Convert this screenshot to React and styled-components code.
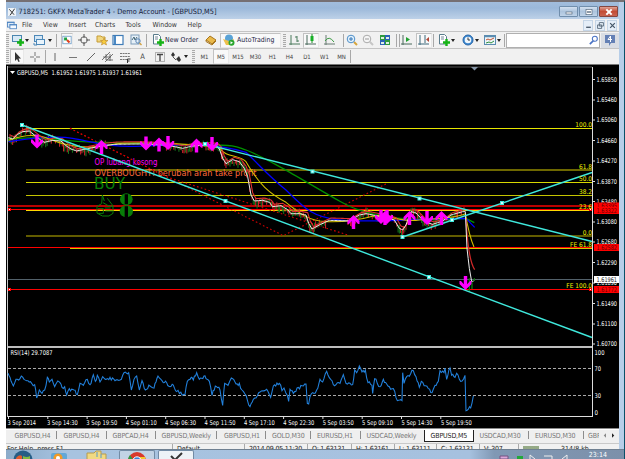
import React from 'react';
import styled, { createGlobalStyle } from 'styled-components';

const Global = createGlobalStyle`
  * { box-sizing: border-box; }
  body { margin: 0; background: #fff; overflow: hidden; }
  body, svg text { font-family: "DejaVu Sans Condensed", "DejaVu Sans", "Noto Sans", sans-serif; font-stretch: condensed; }
`;

const Screen = styled.div`
  display: flex;
  width: 625px;
  height: 459px;
  padding-left: 6px;
  overflow: hidden;
`;
const Frame = styled.div`
  flex: 1;
  display: flex;
  flex-direction: column;
  min-width: 0;
  background: #b7cee8;
  border-top: 2px solid #756f72;
  border-right: 1px solid #0a5068;
`;
const Body = styled.div`
  width: 613px;
  flex: none;
`;
const Row = styled.div`
  display: flex;
  align-items: center;
  height: ${(p) => p.$h}px;
`;
const TitleBar = styled(Row)`
  background: linear-gradient(#a2bddc, #9bb8d9 35%, #bdd1e8);
  color: #15203a;
  padding: 2px 0 0 2px;
`;
const MenuBar = styled(Row)`
  background: #f2f2f3;
  color: #333;
  padding-left: 1px;
`;
const ToolBar = styled(Row)`
  background: #f1f1f1;
  border-top: 1px solid #c4c4c4;
`;
const Cell = styled.div`
  flex: none;
  display: flex;
  align-items: center;
  justify-content: ${(p) => (p.$left ? 'flex-start' : 'center')};
  width: ${(p) => p.$w}px;
  height: 15px;
  margin-left: ${(p) => p.$l || 0}px;
  ${(p) => p.$pressed && 'background:#f9f9f9;border:1px solid #c2c2c2;border-right-color:#e8e8e8;border-bottom-color:#e8e8e8;'}
`;
const Label = styled.span`
  flex: none;
  ${(p) => p.$w && `width: ${p.$w}px;`}
  font-size: ${(p) => p.$size || 6.9}px;
  letter-spacing: ${(p) => p.$ls || 0}px;
  color: ${(p) => p.$c || 'inherit'};
  white-space: nowrap;
`;
const Sep = styled.i`
  flex: none;
  width: 1px;
  height: 13px;
  margin: 0 ${(p) => p.$r || 0}px 0 ${(p) => p.$l || 0}px;
  background: #a8a8a8;
`;
const Grip = styled.i`
  flex: none;
  width: 3px;
  height: 13px;
  margin: 0 ${(p) => p.$r || 0}px 0 ${(p) => p.$l || 0}px;
  background: repeating-linear-gradient(#aaa 0 1px, #eee 1px 2px);
`;
const Caret = styled.i`
  flex: none;
  margin: 0 ${(p) => p.$r || 0}px 0 ${(p) => p.$l || 0}px;
  border: 2px solid transparent;
  border-top: 3px solid #222;
  border-bottom: 0;
`;
const WinButton = styled.div`
  display: flex;
  align-items: center;
  justify-content: center;
  width: 19px;
  height: 11px;
  margin-right: 1px;
  border: 1px solid ${(p) => (p.$close ? '#85463f' : '#708eac')};
  border-radius: 1px;
  background: ${(p) => (p.$close ? 'linear-gradient(#dfa395, #c34c35 50%, #c96450)' : 'linear-gradient(#d3e0ef, #adc4dd 50%, #bfd3e8)')};
`;
const ChildButton = styled.div`
  display: flex;
  align-items: center;
  justify-content: center;
  width: 10px;
  height: 11px;
  margin-right: 2px;
  background: #e5eef8;
  border: 1px solid #c5d5e6;
`;
const Spacer = styled.div`flex: 1;`;
const SearchBox = styled.div`
  display: flex;
  flex: none;
  align-items: center;
  justify-content: flex-end;
  width: 94px;
  height: 15px;
  margin-left: 1px;
  background: #fff;
  border: 1px solid #b0b0b0;
`;
const ChatButton = styled(Cell)`
  background: #d9dde4;
`;
const Plot = styled.svg`
  display: block;
  width: 613px;
  height: 365px;
`;
const TabBar = styled(Row)`
  align-items: stretch;
  background: #efefef;
  color: #777;
  border-top: 1px solid #fff;
  overflow: hidden;
`;
const Tab = styled.div`
  flex: none;
  display: flex;
  align-items: center;
  width: ${(p) => p.$w}px;
  padding-left: ${(p) => p.$pad}px;
  height: ${(p) => (p.$on ? 12 : 11)}px;
  font-size: 7px;
  letter-spacing: -0.14px;
  white-space: nowrap;
  overflow: hidden;
  ${(p) => p.$on && 'background:#fff;color:#222;border:1px solid #222;border-top:0;'}
`;
const TabRule = styled.i`
  flex: none;
  width: 1px;
  height: 8px;
  margin-top: 1px;
  background: #8c8c8c;
`;
const StatusBar = styled(Row)`
  align-items: flex-start;
  background: #f1f1f1;
  border-top: 1px solid #c9c9c9;
  overflow: hidden;
`;
const Status = styled.div`
  flex: none;
  width: ${(p) => p.$w}px;
  height: 6px;
  padding: 1px 0 0 ${(p) => p.$pad || 4}px;
  border-left: ${(p) => (p.$first ? 0 : 1)}px solid #aaa;
  overflow: hidden;
  font-size: 7px;
  line-height: 8px;
  letter-spacing: ${(p) => p.$ls || 0}px;
  color: #222;
  white-space: nowrap;
`;
const Taskbar = styled.div`
  display: flex;
  align-items: flex-start;
  height: 10px;
  width: 618px;
  padding-left: 7px;
  border-top: 1px solid #6f8091;
  background: linear-gradient(90deg, #8cacca, #a8c3e0 10%, #a6c1df 75%, #8098b4 79%, #7c90aa);
  overflow: hidden;
`;
const TaskItem = styled.div`
  flex: none;
  display: flex;
  justify-content: center;
  width: ${(p) => p.$w}px;
  height: 9px;
  margin-right: ${(p) => p.$r || 0}px;
  ${(p) => p.$on && 'background:' + p.$on + ';border:1px solid #728ba5;border-bottom:0;border-radius:2px 2px 0 0;'}
`;
const Clock = styled.div`
  margin: 1px 17px 0 0;
  color: #fff;
  font-size: 7px;
  line-height: 9px;
`;

const Ico = ({ children, s = 12, w }) => (
  <svg width={w || s} height={s} viewBox={`0 0 ${w || 12} 12`} fill="none">{children}</svg>
);
const Plus = () => <path d="M8.5 5v7M5 8.5h7" stroke="#16b316" strokeWidth="2.4" />;
const icons = {
  newChart: <><rect x=".5" y="1.5" width="9" height="6" fill="#d8e9f5" stroke="#4a86b0" /><Plus /></>,
  profiles: <><rect x="1.5" y="1.5" width="8" height="6" fill="#d4e7f6" stroke="#4d88b8" /><rect x="3.5" y="5.5" width="8" height="5" fill="#e9f4fc" stroke="#4d88b8" /><path d="M1 9v2h3" stroke="#4d88b8" /></>,
  market: <><rect x="1" y="1.5" width="10" height="9" fill="#fff" stroke="#6e9cc6" /><path d="M2.500 3h3.500v3.500H2.500z" fill="#20a040" /><path d="M6 6l3 3" stroke="#e04020" strokeWidth="2.600" /></>,
  target: <><circle cx="6" cy="6" r="3.3" stroke="#666" /><path d="M6 0v4M6 8v4M0 6h4M8 6h4" stroke="#555" /></>,
  folderStar: <><path d="M1 2h4l1 1h3v5H1z" fill="#f0d680" stroke="#c59b34" /><path d="M8 4l1 2.5h3L9.7 8l.8 3L8 9.5 5.5 11l.8-3L4.5 6.5h2.5z" fill="#f8cc3c" stroke="#b8862c" strokeWidth=".6" /></>,
  nav: <><rect x="1" y="1.5" width="10" height="9" fill="#fff" stroke="#3f7cb8" strokeWidth="1.2" /><path d="M2 2h2v8H2z" fill="#4a88c4" /></>,
  tester: <><rect x="1" y="1" width="8" height="9" fill="#e6f0f8" stroke="#7c9cba" /><path d="M2 6l2-3 1 3 2-3" stroke="#467" /><circle cx="8" cy="7" r="2.2" stroke="#5884b4" /><path d="M9.5 9l2 2" stroke="#d0a040" strokeWidth="1.5" /></>,
  order: <><path d="M1.5 .5h5l2 2V10h-7z" fill="#fff" stroke="#5a7c8c" /><path d="M3 3h3M3 5h3" stroke="#789" /><Plus /></>,
  book: <><path d="M1 6l4-4 6 4-4 4z" fill="#e9b94a" stroke="#a9761d" /><path d="M1 6v1.5l6 3.5 4-4" stroke="#a9761d" /></>,
  auto: <><circle cx="6" cy="4.5" r="4" fill="#5ba3d6" /><path d="M0 5l6 2 5-2-2 6H3z" fill="#edc14c" /><circle cx="8.5" cy="8.8" r="3" fill="#2aa62e" /><path d="M7.5 7.3v3l2.5-1.5z" fill="#fff" /></>,
  bars: <path d="M2 1v10M0 10h11M8 2v6M6 3h2M8 7h2" stroke="#4b7a5c" />,
  candle: <><path d="M2 1v10M0 10h11" stroke="#4b6a5c" /><path d="M7 0v9" stroke="#188c20" /><rect x="5.5" y="2" width="3" height="5" fill="#16b026" /></>,
  line: <><path d="M2 1v10M0 10h11" stroke="#6b7d74" /><path d="M1 7q4-6 9 1" stroke="#3c9a44" /></>,
  zoomIn: <><path d="M8 8l3 3" stroke="#d6a43c" strokeWidth="2" /><circle cx="5" cy="5" r="3.8" fill="#e2f1fc" stroke="#4d8fc9" /><path d="M5 3v4M3 5h4" stroke="#3878b8" /></>,
  zoomOut: <><path d="M8 8l3 3" stroke="#c6c6c6" strokeWidth="2" /><circle cx="5" cy="5" r="3.8" fill="#f5f5f5" stroke="#aaa" /><path d="M3 5h4" stroke="#999" /></>,
  tiles: <><path d="M1 1h5v5H1zM6 6h5v5H6z" fill="#2f9c3e" /><path d="M6 1h5v5H6zM1 6h5v5H1z" fill="#2c62b8" /><path d="M2 3h3v2H2zM7 3h3v2H7zM2 8h3v2H2zM7 8h3v2H7z" fill="#dff0e4" /></>,
  scroll: <><path d="M2 1v10M0 10h11" stroke="#4b6a5c" /><path d="M5 3v5l4-2.5z" fill="#20a030" /></>,
  shift: <><path d="M2 1v10M0 10h11M7 1v8" stroke="#3f6a7c" /><path d="M11 3v5L8 5.5z" fill="#b04838" /></>,
  clock: <><circle cx="6" cy="6" r="5" fill="#3c88d0" stroke="#2866a8" /><circle cx="6" cy="6" r="3.3" fill="#eef6fd" /><path d="M6 3.5V6h2" stroke="#333" /></>,
  template: <><rect x=".5" y="1.5" width="11" height="9" fill="#eef6fa" stroke="#5b8cb0" /><path d="M1 2.5h10" stroke="#5b8cb0" strokeWidth="1.5" /><path d="M2 6l2-1 2 1 4-2" stroke="#c05030" /><path d="M2 9l3-1 2 1 3-2" stroke="#309040" /></>,
  search: <><circle cx="7" cy="4.5" r="3" stroke="#4a73c4" strokeWidth="1.3" /><path d="M5 7l-4 4" stroke="#4a73c4" strokeWidth="2" /></>,
  cursor: <path d="M4 1v9l2-2 1.5 3 1.2-.6L7.5 7.5H10z" fill="#333" />,
  cross: <path d="M6 1v4M6 7v4M1 6h4M7 6h4" stroke="#777" />,
  vline: <path d="M6 2v8" stroke="#666" />,
  hline: <path d="M2 6.5h8" stroke="#777" />,
  trend: <path d="M2 10l8-8" stroke="#666" />,
  channel: <path d="M0 9l8-8M3 11l8-8M1 6h8M4 9h7M4 3v6M8 3v7" stroke="#555" strokeWidth=".8" />,
  fibo: <><path d="M1 2.5h10M1 5.5h10M1 8.5h7" stroke="#777" strokeDasharray="2 .6" /><path d="M8.5 12V8h3M8.5 10h2" stroke="#333" /></>,
  shapes: <><path d="M1 4l2-3 2 3-2 2zM6 8l3-3 2 4-2 2z" fill="#333" /><path d="M3 6l3 3" stroke="#555" /></>,
  textBox: <><rect x="1.5" y="1.5" width="9" height="9" stroke="#777" strokeDasharray="1 1" /><path d="M3 3.5h6M6 3v7" stroke="#444" strokeWidth="1.3" /></>,
  chat: <><path d="M1 1h10v8H7l-2 3V9H1z" fill="#6480b5" /><path d="M6.5 2L4 5.500h4M6.500 2v6" stroke="#fff" /></>,
  child: <><rect x=".5" y="2.5" width="8" height="6" fill="#dceaf8" stroke="#4b82c0" /><rect x="3.5" y="5.5" width="8" height="5" fill="#f6faff" stroke="#4b82c0" /><path d="M0 3h9M3 6h9" stroke="#4b82c0" /></>,
};
const Tool = ({ n, w = 17, ...rest }) => <Cell $w={w} {...rest}><Ico>{icons[n]}</Ico></Cell>;

/* ---- chart data, in thirds of a pixel ---- */
const price = [8,68,20,72,35,58,50,50,70,48,85,60,100,72,115,82,140,76,165,78,180,92,195,102,212,108,240,102,260,98,290,92,330,88,400,87,470,90,500,94,530,100,555,94,600,90,630,92,640,102,650,130,660,146,680,134,700,140,715,160,725,185,735,240,745,258,770,256,790,262,800,275,825,272,845,284,855,296,880,296,900,300,908,325,918,342,940,330,970,316,1030,318,1060,300,1080,296,1110,302,1140,308,1165,315,1180,340,1190,345,1200,330,1215,290,1230,294,1255,320,1280,328,1310,318,1335,300,1370,290,1378,290,1383,400,1390,460,1397,500,1403,498];
const rsi = [24,100,30,112,40,138,48,118,56,120,64,108,72,118,84,122,95,130,104,134,110,174,118,150,126,160,134,150,142,112,148,126,156,118,164,140,170,128,180,128,186,142,194,140,200,165,208,146,222,150,232,164,240,130,250,136,262,118,270,134,280,104,286,124,292,106,300,126,308,110,316,118,330,112,345,122,360,120,372,98,380,100,386,98,394,150,402,118,410,108,418,150,426,122,436,150,450,138,462,144,468,126,474,108,490,128,500,128,510,140,520,135,530,155,555,164,562,124,574,112,580,120,590,98,598,118,612,108,618,116,628,124,636,166,646,138,660,150,668,196,674,130,684,136,690,122,698,116,708,132,718,130,726,150,735,162,750,200,760,178,768,174,776,158,800,148,812,172,820,138,838,130,846,152,852,144,858,160,866,184,870,148,880,160,895,142,910,138,918,132,922,190,926,192,930,170,950,150,960,118,968,126,980,94,992,118,1000,134,1020,130,1030,104,1038,130,1058,134,1064,90,1070,98,1078,78,1086,96,1096,90,1104,128,1116,136,1118,160,1124,116,1140,140,1150,118,1164,138,1180,146,1192,182,1206,182,1208,98,1212,130,1220,110,1240,92,1248,110,1258,142,1264,124,1285,146,1296,158,1305,136,1315,124,1320,92,1332,98,1335,84,1340,118,1350,84,1355,106,1365,112,1370,100,1382,124,1395,106,1398,212,1412,204,1420,168];

const wobble = (i) => Math.sin(i * 12.9) * 0.6 + Math.sin(i * 4.37 + 1) * 0.4;
function sample(pts, step, amp) {
  const out = [];
  for (let i = 0; i + 3 < pts.length; i += 2) {
    const [x1, y1, x2, y2] = pts.slice(i, i + 4);
    const n = Math.max(1, Math.round((x2 - x1) / step));
    for (let k = 0; k < n; k++) {
      const t = k / n;
      const x = x1 + (x2 - x1) * t;
      out.push([x, y1 + (y2 - y1) * t + (k ? wobble(x) * amp : 0)]);
    }
  }
  out.push(pts.slice(-2));
  return out;
}
const toLine = (a) => a.map((p) => p.join(',')).join(' ');
const candles = sample(price, 4, 0);
const candlePath = (odd) => candles
  .map(([x, y], i) => {
    if ((Math.sin(i * 2.3) > 0) !== odd || (x > 300 && x < 480) || (x > 960 && x < 1025) || x > 1376) return '';
    const len = 8 + Math.abs(wobble(i * 3)) * 20;
    return `M${x} ${y - len / 2 + 2 + wobble(i) * 10}v${len}`;
  }).join('');

const fibs = [[128.5, '100.0', 26, '#e6e600'], [170, '61.8', 26, '#6e6800', 2], [182.5, '50.0', 26, '#d8d800'], [195.5, '38.2', 26, '#c4c400'], [210.5, '23.6', 26, '#ffd800'], [236, '0.0', 26, '#625c00', 2], [248.5, 'FE 61.8', 70, '#d0c800'], [289.5, 'FE 100.0', 592, '#d0c800']];
const reds = [[206, '#b80000', 2], [209.5, '#f00', 1], [247.5, '#f00', 1], [289.5, '#f00', 1]];
const ticks = [['1.65850', 79.5], ['1.65460', 100], ['1.65060', 120], ['1.64660', 140.5], ['1.64270', 161], ['1.63870', 181.5], ['1.63480', 201.5], ['1.63080', 222], ['1.62680', 242], ['1.62290', 262.5], ['1.61890', 283], ['1.61490', 303.5], ['1.61100', 324], ['1.60700', 344]];
const flags = [['1.63395', 206, '#f00', '#600'], ['1.63322', 210.5, '#f00', '#600'], ['1.62582', 247.5, '#f00', '#600'], ['1.61961', 279.5, '#fff', '#222'], ['1.61772', 289.5, '#f00', '#600']];
const dates = ['3 Sep 2014', '3 Sep 14:30', '3 Sep 19:50', '4 Sep 01:10', '4 Sep 06:30', '4 Sep 11:50', '4 Sep 17:10', '4 Sep 22:30', '5 Sep 03:50', '5 Sep 09:10', '5 Sep 14:30', '5 Sep 19:50'];
const rays = [[22, 125, 592, 337.5], [205, 144, 592, 241.5], [402.5, 237, 592, 172.5]];
const anchors = [[22, 125], [225.5, 201], [429, 277], [205, 144], [312.5, 171.5], [419.5, 198.5], [402.5, 237], [452, 220], [502, 203]];
const arrows = [[37, 141.5, 1], [101.5, 147, 0], [146, 143.5, 1], [159, 144.5, 0], [168, 143, 1], [196.5, 145.5, 0], [212, 144, 1], [353.5, 222, 0], [381, 217, 1], [387, 217, 1], [385, 218, 0], [409.5, 218, 0], [427, 218, 1], [441.5, 218, 0], [465.5, 283, 1]];

const Chart = () => (
  <Plot viewBox="6 64 613 365">
    <rect x="6" y="64" width="613" height="365" fill="#000" />
    <path d="M6 64.5h613" stroke="#777" />
    <path d="M8 67h584" stroke="#555" />
    <path d="M7.5 66v351" stroke="#c8c8c8" />
    <path d="M8 347h584" stroke="#bdbdbd" strokeWidth="2" />
    <g shapeRendering="crispEdges">
      {fibs.map(([y, t, x, c, w]) => <path key={t} d={`M${x} ${y}H592`} stroke={c} strokeWidth={w || 1} />)}
      {reds.map(([y, c, w]) => <path key={y} d={`M8 ${y}H592`} stroke={c} strokeWidth={w} />)}
      <path d="M8 279.5H592" stroke="#52606a" />
    </g>
    <path d="M471 67h7l-3.5 3.5z" fill="#8797a9" />
    <text x="94.500" y="165" fontSize="8" fill="#f0f" textLength="63" lengthAdjust="spacingAndGlyphs">OP lubang kosong</text>
    <text x="94.500" y="175.500" fontSize="9" fill="#ff6a3d" textLength="162" lengthAdjust="spacingAndGlyphs">OVERBOUGHT! berubah arah take profit</text>
    <text x="94" y="189" fontSize="16" fill="#078007" textLength="31" lengthAdjust="spacingAndGlyphs">BUY</text>
    <g fill="none" strokeWidth="3.8" transform="translate(6 115) scale(.33333)">
      <g stroke="#d00000" strokeDasharray="5 7" strokeWidth="3.300">
        <path d="M192 40L832 362L1146 204" /><path d="M192 40L480 185L1025 360" />
      </g>
      <path d="M289 240l6 18M289 240l-2 26l-14 8v20l16 9h20l12-8v-20l-16-4-14-8M304 250l18 24M276 281h16v14h-15M296 279h18M298 288h20" stroke="#078007" strokeWidth="3" />
      <g fill="#087c08"><ellipse cx="361" cy="253" rx="19" ry="18" /><ellipse cx="361" cy="289" rx="20" ry="18" /></g>
      <path d="M356 238h10v30h-10zM356 274h10v34h-10z" fill="#000" />
      <path d={candlePath(true)} stroke="#d8232c" strokeWidth="3" /><path d={candlePath(false)} stroke="#167a1c" strokeWidth="3" />
      <path d="M8 74C80 60 150 78 230 80S500 90 600 90S690 95 720 105S800 144 830 160S960 236 1000 258S1065 290 1130 303S1320 315 1380 310L1405 323" stroke="#009000" />
      <path d="M8 80C60 72 150 62 200 70S300 96 380 94S620 78 720 112C760 150 790 185 840 225C900 285 920 305 1000 315S1250 310 1380 310L1406 337" stroke="#0000ff" />
      <path d="M8 76C50 60 90 55 130 72S240 106 310 90S600 90 640 98C660 130 700 118 720 140C760 210 790 235 840 262C880 295 910 318 960 320S1060 315 1100 304S1180 322 1230 316S1340 312 1378 296Q1390 365 1404 396" stroke="#d0bd00" strokeWidth="3.300" />
      <polyline transform="translate(5 -7)" points={toLine(candles.filter(([x]) => x < 1370))} stroke="#e03030" strokeWidth="3.300" />
      <path d="M1380 310C1384 390 1390 440 1406 464" stroke="#d02828" />
      <polyline points={toLine(candles)} stroke="#eee" strokeWidth="3" />
      <path d="M1390 490v38M1398 500v22M1405 490v8" stroke="#0b850b" />
    </g>
    {rays.map((r) => <path key={r[0]} d={`M${r[0]} ${r[1]}L${r[2]} ${r[3]}`} stroke="#3fe8dc" strokeWidth="1.4" />)}
    {arrows.map(([x, y, down], i) => (
      <path key={i} transform={`translate(${x} ${y})${down ? '' : ' scale(1 -1)'}`} d="M-1.7-7H1.7V1.2L4.500-2L6-2V1L0 7L-6 1V-2L-4.500-2L-1.700 1.200Z" fill="#f0f" />
    ))}
    {anchors.map(([x, y]) => <rect key={x} x={x - 1.5} y={y - 1.5} width="3" height="3" fill="#d8ffff" stroke="#3fe8dc" />)}
    {[[9.5, 209.5], [9.5, 289.5], [590.5, 289.5], [590.5, 209.5]].map(([x, y]) => <rect key={x + y} x={x - 1} y={y - 1} width="2" height="2" fill="#fff" stroke="#f00" />)}
    {fibs.map(([y, t]) => <text key={t} x="592" y={y - 1.2} fontSize="6.5" textAnchor="end" fill="#f0f000">{t}</text>)}
    <path d="M10 71h5l-2.5 3z" fill="#fff" />
    <text x="17" y="74.5" fontSize="6.5" fill="#fff" textLength="125" lengthAdjust="spacingAndGlyphs">GBPUSD,M5&#160; 1.61952 1.61975 1.61937 1.61961</text>
    <path d="M592.5 67v350M8 416.5h585" stroke="#ddd" />
    <path d="M8 368.5h584M8 395.5h584" stroke="#aaa" strokeDasharray="3 2" />
    <polyline transform="translate(0 340) scale(.33333)" points={toLine(sample(rsi, 4, 6))} fill="none" stroke="#2281dc" strokeWidth="3.2" />
    <text x="10.5" y="355.3" fontSize="6.5" fill="#fff" textLength="42" lengthAdjust="spacingAndGlyphs">RSI(14) 29.7087</text>
    {ticks.map(([t, y]) => (
      <g key={t}><path d={`M593 ${y}h2`} stroke="#ddd" /><text x="596.5" y={y + 2.3} fontSize="6.5" fill="#fff" textLength="20.5" lengthAdjust="spacingAndGlyphs">{t}</text></g>
    ))}
    {flags.map(([t, y, bg, fg]) => (
      <g key={t}><rect x="594" y={y - 3.5} width="25" height="7" fill={bg} /><text x="596.5" y={y + 2.3} fontSize="6.5" fill={fg} textLength="20.5" lengthAdjust="spacingAndGlyphs">{t}</text></g>
    ))}
    {[['100', 354.5, 10], ['70', 370.5, 6.5], ['30', 397.5, 6.5], ['0', 415, 3.5]].map(([t, y, w]) => <text key={t} x="594.500" y={y} fontSize="6.5" fill="#fff" textLength={w} lengthAdjust="spacingAndGlyphs">{t}</text>)}
    {dates.map((t, i) => (
      <g key={t}><path d={`M${8.5 + i * 39.3} 417v2`} stroke="#ddd" /><text x={7.5 + i * 39.4} y="424.8" fontSize="6.5" fill="#fff" textLength={i ? 31 : 28.5} lengthAdjust="spacingAndGlyphs">{t}</text></g>
    ))}
    <path d="M6 428.5h613" stroke="#8a8a8a" />
  </Plot>
);

const tabs = [['GBPUSD,H4', 51, 8.5], ['GBPUSD,H4', 49.5, 6.5], ['GBPCAD,H4', 49, 6], ['GBPUSD,Weekly', 61.5, 6], ['GBPUSD,H1', 49, 7], ['GOLD,M30', 44.5, 6], ['EURUSD,H1', 50, 6.5], ['USDCAD,Weekly', 63.5, 6]];
const frames = [['M1', 17], ['M5', 16], ['M15', 18], ['M30', 17], ['H1', 17], ['H4', 17], ['D1', 18], ['W1', 17], ['MN', 17]];

export default function App() {
  return (
    <Screen>
      <Global />
      <Frame>
        <Body>
          <TitleBar $h={17}>
            <Cell $w={10.5} $left><Ico s={8}><rect width="12" height="12" fill="#eef3f8" /><path d="M2 2l7 8M10 1L3 11" stroke="#333" strokeWidth="1.5" /></Ico></Cell>
            <Label $w={400} $size={7.3}>718251: GKFX MetaTrader 4 - Demo Account - [GBPUSD,M5]</Label>
            <Spacer />
            <WinButton><Ico s={8}><rect x="1.5" y="6" width="9" height="3" fill="#fff" stroke="#52657a" /></Ico></WinButton>
            <WinButton><Ico s={8}><rect x="1.5" y="2" width="9" height="8" fill="#fff" stroke="#52657a" /><rect x="4" y="5" width="4" height="2" stroke="#52657a" /></Ico></WinButton>
            <WinButton $close><Ico s={8}><path d="M2 2l8 8M10 2l-8 8" stroke="#fff" strokeWidth="3" /></Ico></WinButton>
          </TitleBar>
          <MenuBar $h={12}>
            <Cell $w={15} $left><Ico s={10}>{icons.child}</Ico></Cell>
            <Label $w={21}>File</Label><Label $w={25.5}>View</Label><Label $w={26.5}>Insert</Label><Label $w={30.5}>Charts</Label><Label $w={27}>Tools</Label><Label $w={35}>Window</Label><Label $w={30}>Help</Label>
            <Spacer />
            <ChildButton><Ico s={7}><path d="M2 9h8" stroke="#345" strokeWidth="2" /></Ico></ChildButton>
            <ChildButton><Ico s={7}><path d="M4 1h7v6H4zM1 5h7v6H1z" stroke="#567" strokeWidth="1.5" /></Ico></ChildButton>
            <ChildButton><Ico s={7}><path d="M2 2l8 8M10 2l-8 8" stroke="#456" strokeWidth="2" /></Ico></ChildButton>
          </MenuBar>
          <ToolBar $h={17}>
            <Grip $r={2} /><Tool n="newChart" w={13} /><Caret $l={1} $r={2} /><Tool n="profiles" w={16} /><Caret $l={1} $r={4} />
            <Sep $r={4} /><Tool n="market" w={12} $pressed /><Tool n="target" w={22} /><Tool n="folderStar" w={13} /><Tool n="nav" w={20} /><Tool n="tester" w={15} />
            <Sep $l={3} $r={4} /><Tool n="order" w={14} /><Label $w={39} $ls={0.03} $c="#1b1b44">New Order</Label><Tool n="book" w={14} />
            <Cell $w={61} $l={2} $pressed $left><Ico w={16}><g transform="translate(2)">{icons.auto}</g></Ico><Label $w={42} $ls={0.05} $c="#1b1b44">AutoTrading</Label></Cell>
            <Grip $l={2} $r={1} /><Tool n="bars" w={16} /><Tool n="candle" w={16} $pressed /><Tool n="line" w={21} />
            <Sep $l={3} /><Tool n="zoomIn" w={15} /><Tool n="zoomOut" w={17} /><Tool n="tiles" w={17} />
            <Sep $l={3} $r={2} /><Sep /><Tool n="scroll" w={14} /><Tool n="shift" w={16} $l={2} $pressed />
            <Sep $l={1} $r={3} /><Tool n="order" w={13} /><Caret $l={1} $r={6} /><Tool n="clock" w={13} /><Caret $l={1} $r={4} /><Tool n="template" w={14} /><Caret $r={3} /><Sep />
            <SearchBox><Ico s={10}>{icons.search}</Ico></SearchBox>
            <ChatButton $w={18} $l={1}><Ico>{icons.chat}</Ico></ChatButton>
          </ToolBar>
          <ToolBar $h={16}>
            <Grip $r={1} /><Tool n="cursor" w={14} $pressed /><Tool n="cross" w={21} /><Sep $r={1} />
            <Tool n="vline" w={16} /><Tool n="hline" w={19} /><Tool n="trend" w={17} /><Tool n="channel" w={17} /><Tool n="fibo" w={18} />
            <Cell $w={17}><Label $size={7.5} $c="#444">A</Label></Cell><Tool n="textBox" w={18} /><Tool n="shapes" w={14} /><Caret $l={1} $r={4} />
            <Grip $r={1} />
            {frames.map(([t, w], i) => <Cell key={t} $w={w} $pressed={i === 1}><Label $size={6} $c="#444">{t}</Label></Cell>)}
            <Sep />
          </ToolBar>
          <Chart />
          <TabBar $h={14}>
            {tabs.map(([t, w, pad], i) => <React.Fragment key={i}><Tab $w={i < 7 ? w - 1 : w} $pad={pad}>{t}</Tab>{i < 7 && <TabRule />}</React.Fragment>)}
            <Tab $w={49.5} $pad={5.5} $on>GBPUSD,M5</Tab>
            <Tab $w={54} $pad={6}>USDCAD,M30</Tab><TabRule />
            <Tab $w={54} $pad={6.5}>EURUSD,M30</Tab><TabRule />
            <Tab $w={15} $pad={4.5}>GBP</Tab>
            <Tab $w={19} $pad={2}><Ico w={16} s={9}><path d="M4 3v6L1 6z" fill="#888" /><path d="M12 3v6l3-3z" fill="#222" /></Ico></Tab>
          </TabBar>
          <StatusBar $h={6}>
            <Status $w={166} $pad={1} $first>For Help, press F1</Status><Status $w={72}>Default</Status><Status $w={63} $ls={-0.2}>2014.09.05 11:30</Status><Status $w={44} $ls={-0.2}>O: 1.63131</Status><Status $w={43} $ls={-0.2}>H: 1.63161</Status><Status $w={42} $ls={-0.2}>L: 1.63111</Status><Status $w={43} $ls={-0.2}>C: 1.63131</Status><Status $w={39} $ls={-0.2}>V: 307</Status>
            <Status $w={42}><svg width="18" height="5"><path d="M1 0v5M3 0v5M5 0v5M7 0v5M9 0v5M11 0v5M13 0v5M15 0v5" stroke="#3b631c" /></svg></Status>
            <Status $w={59} $first $pad={1}>314/8 kb</Status>
          </StatusBar>
          <Taskbar>
            <TaskItem $w={20} $r={16}><svg width="20" height="9"><circle cx="10" cy="10" r="9.5" fill="#265d86" /><path d="M3 8q3-4 6-2v3H3z" fill="#e45c2d" /><path d="M10 6q4 2 7 0v3h-7z" fill="#83bb42" /></svg></TaskItem>
            <TaskItem $w={20} $r={17}><svg width="18" height="9"><rect x="1" y="3" width="16" height="8" rx="2" fill="#63a8d8" /><circle cx="8" cy="8" r="4.5" fill="#f29a26" /><circle cx="8" cy="8" r="2" fill="#fff" /></svg></TaskItem>
            <TaskItem $w={22} $r={11}><svg width="22" height="9"><path d="M1 3h7l2-2h5v3h5v6H1z" fill="#f1d981" stroke="#b59b51" /><path d="M11 2v5M15 4v4" stroke="#579acb" /></svg></TaskItem>
            <TaskItem $w={36} $r={3} $on="#c2d3e5"><svg width="20" height="9"><circle cx="10" cy="10" r="9" fill="#d9382c" /><path d="M1 9a9 9 0 0 1 2-5l4 6z" fill="#2d9a46" /><path d="M10 6h8l1 4h-9z" fill="#f3c92e" /><circle cx="10" cy="10" r="4.2" fill="#3b7fd8" stroke="#fff" /></svg></TaskItem>
            <TaskItem $w={36} $on="#edf2f7"><svg width="18" height="9"><path d="M4 5l5 5M15 2L8 9" stroke="#333" strokeWidth="2" /></svg></TaskItem>
            <Spacer />
            <TaskItem $w={95}><svg width="90" height="9"><path d="M4 6h8v3H4z" fill="#d9a7d8" stroke="#745382" /><path d="M21 6h6v3h-6z" fill="#22a83b" /><path d="M34 9V5l5 4M48 6h8v3M66 9l5-4v4" stroke="#eee" fill="none" /></svg></TaskItem>
            <Clock>23:14</Clock>
          </Taskbar>
        </Body>
      </Frame>
    </Screen>
  );
}
